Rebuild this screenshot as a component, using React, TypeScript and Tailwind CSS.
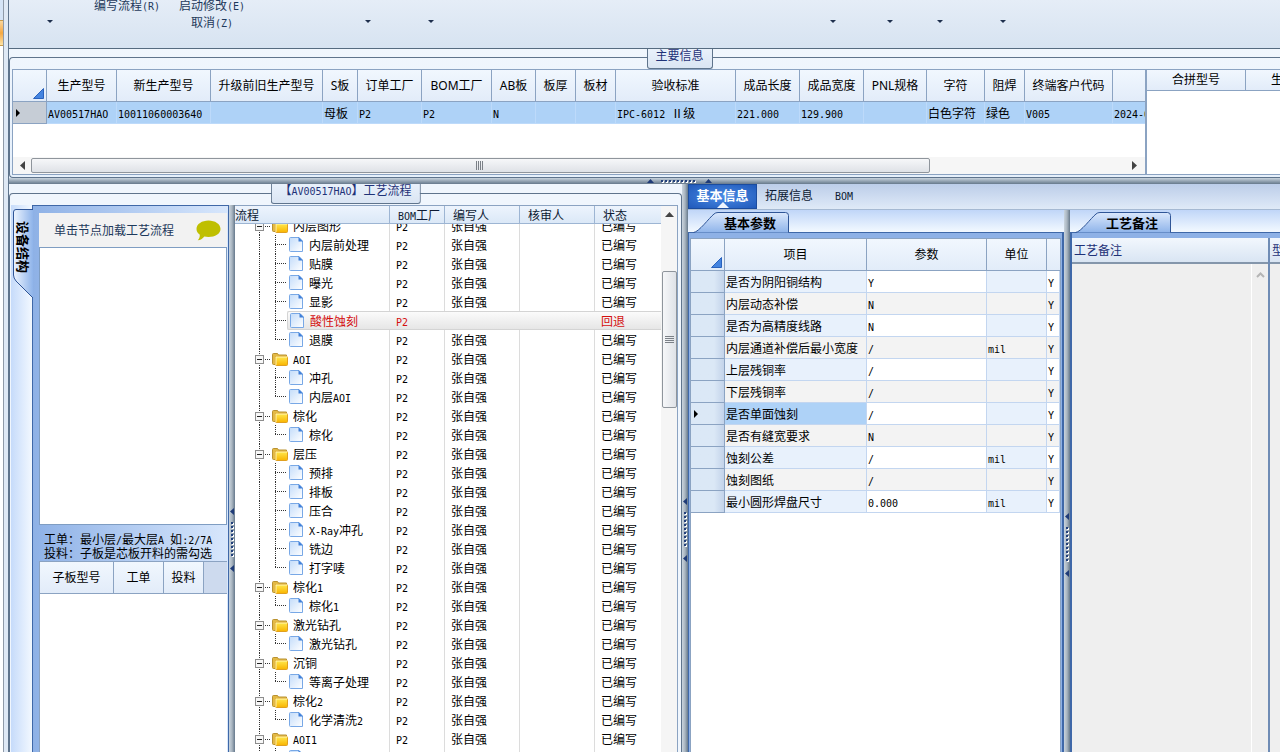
import { clsx } from "clsx";
import type { ReactNode } from "react";

// ── data ─────────────────────────────────────────────────────────────────────

const INFO_COLUMNS = [
  { title: "生产型号", width: 70, value: "AV00517HAO" },
  { title: "新生产型号", width: 94, value: "10011060003640" },
  { title: "升级前旧生产型号", width: 112, value: "" },
  { title: "S板", width: 35, value: "母板" },
  { title: "订单工厂", width: 64, value: "P2" },
  { title: "BOM工厂", width: 70, value: "P2" },
  { title: "AB板", width: 44, value: "N" },
  { title: "板厚", width: 40, value: "" },
  { title: "板材", width: 40, value: "" },
  { title: "验收标准", width: 120, value: "IPC-6012 Ⅱ级" },
  { title: "成品长度", width: 64, value: "221.000" },
  { title: "成品宽度", width: 64, value: "129.900" },
  { title: "PNL规格", width: 63, value: "" },
  { title: "字符", width: 58, value: "白色字符" },
  { title: "阻焊", width: 40, value: "绿色" },
  { title: "终端客户代码", width: 88, value: "V005" },
  { title: "", width: 88, value: "2024-01-05" },
];

interface FlowGroup {
  name: string;
  steps: string[];
}

const FLOW: FlowGroup[] = [
  {
    name: "内层图形",
    steps: ["内层前处理", "贴膜", "曝光", "显影", "酸性蚀刻", "退膜"],
  },
  { name: "AOI", steps: ["冲孔", "内层AOI"] },
  { name: "棕化", steps: ["棕化"] },
  {
    name: "层压",
    steps: ["预排", "排板", "压合", "X-Ray冲孔", "铣边", "打字唛"],
  },
  { name: "棕化1", steps: ["棕化1"] },
  { name: "激光钻孔", steps: ["激光钻孔"] },
  { name: "沉铜", steps: ["等离子处理"] },
  { name: "棕化2", steps: ["化学清洗2"] },
  { name: "AOI1", steps: ["自动检查"] },
];

const REJECTED = "酸性蚀刻";

const PARAMS = [
  ["是否为阴阳铜结构", "Y", ""],
  ["内层动态补偿", "N", ""],
  ["是否为高精度线路", "N", ""],
  ["内层通道补偿后最小宽度", "/", "mil"],
  ["上层残铜率", "/", ""],
  ["下层残铜率", "/", ""],
  ["是否单面蚀刻", "/", ""],
  ["是否有缝宽要求", "N", ""],
  ["蚀刻公差", "/", "mil"],
  ["蚀刻图纸", "/", ""],
  ["最小圆形焊盘尺寸", "0.000", "mil"],
];

// ── small pieces ─────────────────────────────────────────────────────────────

// Latin runs are set in a half-width face beside the full-width characters
function Mixed({ children }: { children: string }) {
  return (
    <>
      {children.split(/([\x20-\x7e]+)/).map((part, i) =>
        i % 2 ? (
          <span
            key={i}
            className="font-['DejaVu_Sans_Mono','Liberation_Mono',monospace] text-[10px] leading-none whitespace-pre"
          >
            {part}
          </span>
        ) : (
          part
        ),
      )}
    </>
  );
}

function CornerMark() {
  return (
    <svg width="11" height="11" className="mt-auto mr-0.5 mb-0.5 ml-auto block">
      <path d="M0.5 10.5 L10.5 0.5 V10.5 Z" fill="#4484e0" stroke="#2a62bd" />
    </svg>
  );
}

function RowPointer() {
  return (
    <svg width="4" height="8" className="ml-[3px] block">
      <path d="M0 0 L4 4 L0 8 Z" fill="#000" />
    </svg>
  );
}

function DropButton({ className }: { className: string }) {
  return (
    <button
      type="button"
      aria-label="更多"
      className={clsx("flex shrink-0 justify-center pb-[18px]", className)}
    >
      <span className="flex h-[17px] items-center">
        <svg width="6" height="3">
          <path d="M0 0 H6 L3 3 Z" fill="#1e2f4d" />
        </svg>
      </span>
    </button>
  );
}

function Caption({ children }: { children: ReactNode }) {
  return (
    <div className="h-5 rounded-b-[3px] border border-t-0 border-[#5f748c] bg-linear-to-b from-[#e9f1fb] to-[#dae5f3] px-2 text-center leading-3 whitespace-nowrap text-[#1f3278]">
      {children}
    </div>
  );
}

function Grip({ vertical = false }: { vertical?: boolean }) {
  const dots = Array.from({ length: 9 }, (_, i) => i);
  if (vertical) {
    return (
      <svg width="6" height="64" className="block">
        <path d="M5 0 V7 L1 3.5 Z M5 57 V64 L1 60.5 Z" fill="#1f3b78" />
        {dots.map((i) => (
          <g key={i}>
            <rect x="3" y={15 + i * 4} width="2" height="2" fill="#fff" />
            <rect x="2" y={14 + i * 4} width="2" height="2" fill="#22407c" />
          </g>
        ))}
      </svg>
    );
  }
  return (
    <svg width="66" height="6" className="block">
      <path d="M0 5 H7 L3.5 1 Z M58 5 H65 L61.5 1 Z" fill="#1f3b78" />
      {dots.map((i) => (
        <g key={i}>
          <rect x={15 + i * 4} y="3" width="2" height="2" fill="#fff" />
          <rect x={14 + i * 4} y="2" width="2" height="2" fill="#22407c" />
        </g>
      ))}
    </svg>
  );
}

function VSplitter({ className }: { className?: string }) {
  return (
    <div
      className={clsx(
        "w-1.5 shrink-0 bg-linear-to-r from-[#c9d4de] via-[#a9b5c0] to-[#66798c]",
        className,
      )}
    >
      <Grip vertical />
    </div>
  );
}

function SlantTab({ children }: { children: string }) {
  return (
    <div className="h-[22px] shrink-0 bg-linear-to-b from-[#c0d6f8] to-[#f3f9ff] pt-0.5 pl-[5px]">
      <button
        type="button"
        className="relative block h-[21px] w-24 pl-[31px] text-left text-[13px] leading-5 font-bold text-black"
      >
        <svg className="absolute inset-0" width="96" height="21">
          <defs>
            <linearGradient id="slant" x1="0" y1="0" x2="0" y2="1">
              <stop offset="0" stopColor="#dbe8fc" />
              <stop offset="1" stopColor="#8fb4ea" />
            </linearGradient>
          </defs>
          <path
            d="M0.5 20.5 C6 20 16 6 21 2 Q22.500 0.500 25 0.500 H92.500 Q95.500 0.500 95.500 3.500 V20.500"
            fill="url(#slant)"
            stroke="#2f5597"
          />
        </svg>
        <span className="relative">{children}</span>
      </button>
    </div>
  );
}

// ── ribbon ───────────────────────────────────────────────────────────────────

function Ribbon() {
  return (
    <div className="flex h-[49px] shrink-0 items-end overflow-hidden border-b border-[#566b80] bg-linear-to-b from-[#e5edf7] to-[#d7e3f1] leading-[17px] text-[#1e395b]">
      <DropButton className="w-[82px]" />
      <button type="button" className="w-[72px] shrink-0 pb-[35px]">
        <Mixed>编写流程(R)</Mixed>
      </button>
      <button type="button" className="w-[98px] shrink-0 pb-[18px]">
        <Mixed>启动修改(E)</Mixed>
        <br />
        <Mixed>取消(Z)</Mixed>
      </button>
      <DropButton className="ml-[78px] w-[58px]" />
      <DropButton className="w-[68px]" />
      <DropButton className="ml-[340px] w-14" />
      <DropButton className="w-[58px]" />
      <DropButton className="w-[42px]" />
      <DropButton className="w-[84px]" />
    </div>
  );
}

// ── main info ────────────────────────────────────────────────────────────────

const GRID = "table-fixed border-separate border-spacing-0";

const HEAD_CELL =
  "overflow-hidden border-r border-b border-[#8ba3c2] bg-linear-to-b from-[#f1f7fe] to-[#e2ecf9] p-0 text-center font-normal whitespace-nowrap font-['Noto_Sans','Noto_Sans_CJK_SC',sans-serif]";

function InfoGrid() {
  return (
    <div className="flex min-w-0 flex-1 flex-col overflow-hidden border-r-2 border-l border-[#8ba3c2] bg-white">
      <table className={clsx("w-[1188px]", GRID)}>
        <colgroup>
          <col className="w-[34px]" />
          {INFO_COLUMNS.map((c, i) => (
            <col key={i} style={{ width: c.width }} />
          ))}
        </colgroup>
        <thead>
          <tr className="h-8">
            <th className={HEAD_CELL} aria-label="选择">
              <div className="flex h-[31px]">
                <CornerMark />
              </div>
            </th>
            {INFO_COLUMNS.map((c, i) => (
              <th key={i} className={HEAD_CELL}>
                {c.title}
              </th>
            ))}
          </tr>
        </thead>
        <tbody>
          <tr className="h-[22px] bg-[#aed2f7]">
            <td className="border-r border-b border-[#8ba3c2] bg-[#c6cdd6] p-0">
              <RowPointer />
            </td>
            {INFO_COLUMNS.map((c, i) => (
              <td
                key={i}
                className="overflow-hidden border-r border-b border-[#bddafa] p-0 pl-px whitespace-nowrap"
              >
                <Mixed>{c.value}</Mixed>
              </td>
            ))}
          </tr>
        </tbody>
      </table>
      <div className="mt-auto flex h-[17px] items-center bg-[#f6f6f6]">
        <button type="button" aria-label="向左" className="w-[18px] pl-[7px]">
          <svg width="5" height="9" className="block">
            <path d="M5 0 V9 L0 4.5 Z" fill="#444" />
          </svg>
        </button>
        <div className="flex-1">
          <div className="flex h-[15px] w-[82%] items-center justify-center rounded-[2px] border border-[#8f959c] bg-linear-to-b from-[#f6f7f9] to-[#dfe2e7]">
            <svg width="8" height="9">
              <path
                d="M0.5 0 V9 M2.5 0 V9 M4.500 0 V9 M6.500 0 V9"
                stroke="#7b8087"
              />
            </svg>
          </div>
        </div>
        <button type="button" aria-label="向右" className="w-[18px] pl-[5px]">
          <svg width="5" height="9" className="block">
            <path d="M0 0 V9 L5 4.5 Z" fill="#444" />
          </svg>
        </button>
      </div>
    </div>
  );
}

function MainInfo() {
  return (
    <section className="relative shrink-0 bg-linear-to-b from-[#f0f6fd] to-[#e6f0fb] pt-2">
      <div className="rounded-l-[4px] border border-r-0 border-[#5f748c] pt-[11px] pb-0.5 pl-0.5">
        <div className="flex h-[106px] border-y border-[#8ba3c2]">
          <InfoGrid />
          <div className="w-[133px] shrink-0 overflow-hidden bg-white">
            <table className={clsx("w-[198px]", GRID)}>
              <thead>
                <tr className="h-[21px]">
                  <th className={HEAD_CELL}>合拼型号</th>
                  <th className={HEAD_CELL}>生产型号</th>
                </tr>
              </thead>
            </table>
          </div>
        </div>
      </div>
      <div className="absolute top-0 left-1/2 ml-0.5">
        <Caption>主要信息</Caption>
      </div>
    </section>
  );
}

// ── device structure ─────────────────────────────────────────────────────────

function DevicePanel() {
  return (
    <div className="flex w-[218px] shrink-0">
      <div className="relative w-[21px] shrink-0 bg-linear-to-r from-[#c6dbfa] to-[#f2f8ff] pt-1">
        <button
          type="button"
          className="relative ml-0.5 flex h-[90px] w-5 items-start justify-center pt-3"
        >
          <svg className="absolute inset-0" width="20" height="90">
            <defs>
              <linearGradient id="side" x1="0" y1="0" x2="1" y2="0">
                <stop offset="0" stopColor="#eef5ff" />
                <stop offset="1" stopColor="#8fb4ea" />
              </linearGradient>
            </defs>
            <path
              d="M20 0.5 H3 Q0.5 0.5 0.5 3 V66 Q0.500 69 3 72 L20 89"
              fill="url(#side)"
              stroke="#2f5597"
            />
          </svg>
          <span className="relative text-[13px] leading-5 font-bold text-black [text-orientation:sideways] [writing-mode:vertical-rl]">
            设备结构
          </span>
        </button>
      </div>
      <div className="flex min-w-0 flex-1 flex-col border-t border-r border-l border-[#3f68a8] bg-linear-to-r from-[#8eb1e6] to-[#d8e7fc] pt-[7px] pr-px pl-1.5">
        <div className="flex h-[34px] shrink-0 items-center justify-between bg-[#f2f2f2] pr-1.5 pl-[15px] text-[#1e395b]">
          单击节点加载工艺流程
          <svg width="25" height="21" viewBox="0 0 25 21">
            <path
              d="M12.500 0.500 C19 0.500 24.500 4 24.500 9 C24.500 13.800 19 17 12.500 17 C11 17 9.500 16.800 8.300 16.500 C6.500 18.800 4.500 20 1.800 20.300 C3.300 18.700 3.800 17.200 3.800 14.800 C1.800 13.300 0.500 11.300 0.500 9 C0.500 4 6 0.500 12.500 0.500 Z"
              fill="#bfbf00"
            />
          </svg>
        </div>
        <div className="h-[278px] shrink-0 border border-[#7f9dc2] bg-white" />
        <p className="shrink-0 pt-[7px] pb-px pl-[5px] leading-[14px] whitespace-nowrap text-black">
          <Mixed>工单：最小层/最大层A 如:2/7A</Mixed>
          <br />
          投料：子板是芯板开料的需勾选
        </p>
        <div className="min-h-0 flex-1 border-t border-l border-[#8ba3c2] bg-white">
          <table className={clsx("w-full", GRID)}>
            <colgroup>
              <col className="w-[74px]" />
              <col className="w-[50px]" />
              <col className="w-10" />
              <col />
            </colgroup>
            <thead>
              <tr className="h-8">
                <th className={HEAD_CELL}>子板型号</th>
                <th className={HEAD_CELL}>工单</th>
                <th className={HEAD_CELL}>投料</th>
                <td className="border-b border-[#8ba3c2] bg-[#cddaee]" />
              </tr>
            </thead>
          </table>
        </div>
      </div>
    </div>
  );
}

// ── process tree ─────────────────────────────────────────────────────────────

function GroupNode() {
  return (
    <svg width="56" height="19" className="block shrink-0">
      <defs>
        <linearGradient id="folder" x1="0" y1="0" x2="0" y2="1">
          <stop offset="0" stopColor="#ffe94f" />
          <stop offset="1" stopColor="#f9b400" />
        </linearGradient>
      </defs>
      <path d="M24.500 0 V19 M30 10.500 H36" stroke="#333" strokeDasharray="1 1" />
      <rect x="20.500" y="6.500" width="8" height="8" fill="#f7f7f7" stroke="#8d8d8d" />
      <path d="M22 10.500 H27" stroke="#222" />
      <path
        d="M37.500 5.500 Q37.500 4.500 38.500 4.500 H42.500 L43.500 6 H51.500 V15.500 H38.500 Q37.500 15.500 37.500 14.500 Z"
        fill="#e3b945"
        stroke="#b9912f"
      />
      <rect x="40.500" y="7.500" width="12" height="9" rx="1" fill="url(#folder)" stroke="#e0a020" />
      <path d="M41 16 V8 H52" fill="none" stroke="#fff6b0" />
    </svg>
  );
}

function StepLines({ last }: { last: boolean }) {
  return (
    <svg width="52" height="19" className="block shrink-0">
      <path
        d={clsx("M24.5 0 V19", last ? "M40.5 0 V9" : "M40.5 0 V19", "M40 9.5 H51")}
        fill="none"
        stroke="#333"
        strokeDasharray="1 1"
      />
    </svg>
  );
}

function PageIcon() {
  return (
    <svg width="16" height="17" className="ml-0.5 block shrink-0">
      <defs>
        <linearGradient id="page" x1="0" y1="0" x2="1" y2="1">
          <stop offset="0" stopColor="#c3dcfa" />
          <stop offset="1" stopColor="#fff" />
        </linearGradient>
      </defs>
      <path
        d="M1.500 1.500 H10 L13.500 5 V15.500 H1.500 Q0.500 15.500 0.500 14.500 V2.500 Q0.500 1.500 1.500 1.500 Z"
        fill="url(#page)"
        stroke="#78a8e6"
      />
      <path d="M9.500 1 L14 5.500 H9.500 Z" fill="#3f7fd8" />
    </svg>
  );
}

const TREE_HEAD =
  "border-r border-b border-[#9db5d3] bg-linear-to-b from-[#edf4fd] to-[#dbe8f7] p-0 text-left font-normal text-[#0d1a33]";

function TreeCols() {
  return (
    <colgroup>
      <col className="w-[155px]" />
      <col className="w-[55px]" />
      <col className="w-[75px]" />
      <col className="w-[75px]" />
      <col />
    </colgroup>
  );
}

function TreeRow({
  name,
  child,
  last = false,
}: {
  name: string;
  child: boolean;
  last?: boolean;
}) {
  const hot = name === REJECTED;
  const cell = clsx(
    "p-0 whitespace-nowrap",
    hot
      ? "border-y border-[#d4d4d4] bg-linear-to-b from-[#fbfbfb] to-[#e6e6e6]"
      : "border-r border-r-[#dcdcdc]",
  );
  return (
    <tr className={clsx("h-[19px]", hot ? "text-[#d40f0f]" : "text-black")}>
      <td
        className={clsx(
          "p-0 whitespace-nowrap",
          !hot && "border-r border-r-[#dcdcdc]",
        )}
      >
        <div className="flex h-[19px] items-center">
          {child ? <StepLines last={last} /> : <GroupNode />}
          <span
            className={clsx(
              "flex h-[19px] flex-1 items-center",
              child ? "gap-1" : "pl-0.5",
              hot &&
                "rounded-l-[2px] border border-r-0 border-[#d4d4d4] bg-linear-to-b from-[#fbfbfb] to-[#e6e6e6]",
            )}
          >
            {child && <PageIcon />}
            <span>
              <Mixed>{name}</Mixed>
            </span>
          </span>
        </div>
      </td>
      <td className={clsx(cell, "pl-1.5")}>
        <Mixed>P2</Mixed>
      </td>
      <td className={clsx(cell, "pl-1.5")}>{hot ? "" : "张自强"}</td>
      <td className={cell} />
      <td className={clsx(cell, "border-r-0 pl-1.5")}>
        {hot ? "回退" : "已编写"}
      </td>
    </tr>
  );
}

function ProcessTree() {
  return (
    <div className="flex min-w-0 flex-1 border-t border-r border-[#8ba3c2] bg-white">
      <div className="flex min-w-0 flex-1 flex-col">
        <table className={clsx("w-full shrink-0", GRID)}>
          <TreeCols />
          <thead>
            <tr className="h-[18px] leading-4">
              <th className={TREE_HEAD}>流程</th>
              <th className={clsx(TREE_HEAD, "pl-2 whitespace-nowrap")}>
                <Mixed>BOM工厂</Mixed>
              </th>
              <th className={clsx(TREE_HEAD, "pl-2")}>编写人</th>
              <th className={clsx(TREE_HEAD, "pl-2")}>核审人</th>
              <th className={clsx(TREE_HEAD, "border-r-0 pl-2")}>状态</th>
            </tr>
          </thead>
        </table>
        {/* scrolled by part of a row */}
        <div className="min-h-0 flex-1 overflow-hidden">
          <table className={clsx("-mt-2 w-full leading-4", GRID)}>
            <TreeCols />
            <tbody>
              {FLOW.map((group) => [
                <TreeRow key={group.name} name={group.name} child={false} />,
                ...group.steps.map((step, i) => (
                  <TreeRow
                    key={`${group.name}/${step}`}
                    name={step}
                    child
                    last={i === group.steps.length - 1}
                  />
                )),
              ])}
            </tbody>
          </table>
        </div>
      </div>
      <div className="flex w-4 shrink-0 flex-col items-center bg-[#f5f5f5]">
        <button type="button" aria-label="向上" className="h-[65px] pt-1.5">
          <svg width="9" height="5" className="block">
            <path d="M0 5 H9 L4.500 0 Z" fill="#444" />
          </svg>
          <span className="block h-[54px]" />
        </button>
        <div className="flex h-[137px] w-[15px] items-center justify-center rounded-[2px] border border-[#8f959c] bg-linear-to-r from-[#f6f7f9] to-[#dfe2e7]">
          <svg width="9" height="8">
            <path
              d="M0 0.500 H9 M0 2.500 H9 M0 4.500 H9 M0 6.500 H9"
              stroke="#7b8087"
            />
          </svg>
        </div>
      </div>
    </div>
  );
}

function ProcessSection() {
  return (
    <section className="relative flex w-[673px] shrink-0 flex-col bg-[#f0f6fd] pt-[9px]">
      <div className="flex min-h-0 flex-1 rounded-t-[4px] border border-b-0 border-[#5f748c] pt-[11px] pr-[3px] pl-px">
        <DevicePanel />
        <VSplitter className="pt-[303px]" />
        <ProcessTree />
      </div>
      <div className="absolute top-0 left-1/2 -translate-x-1/2">
        <Caption>
          <Mixed>【AV00517HAO】工艺流程</Mixed>
        </Caption>
      </div>
    </section>
  );
}

// ── parameters ───────────────────────────────────────────────────────────────

function ParamGrid() {
  return (
    <div className="min-h-0 flex-1 overflow-hidden border border-b-0 border-[#8ba3c2] bg-white">
      <table className={clsx("w-full", GRID)}>
        <colgroup>
          <col className="w-[34px]" />
          <col className="w-[142px]" />
          <col className="w-[120px]" />
          <col className="w-[60px]" />
          <col />
        </colgroup>
        <thead>
          <tr className="h-8">
            <th className={HEAD_CELL} aria-label="选择">
              <div className="flex h-[31px]">
                <CornerMark />
              </div>
            </th>
            <th className={HEAD_CELL}>项目</th>
            <th className={HEAD_CELL}>参数</th>
            <th className={HEAD_CELL}>单位</th>
            <th className={clsx(HEAD_CELL, "border-r-0")} aria-label="启用" />
          </tr>
        </thead>
        <tbody>
          {PARAMS.map(([name, value, unit], i) => {
            const odd = i % 2 === 1;
            const current = name === "是否单面蚀刻";
            const cell =
              "overflow-hidden border-r border-b border-[#c3d6f0] p-0 pl-px whitespace-nowrap";
            const fixed = odd ? "bg-[#f3f3f3]" : "bg-[#e8f1fc]";
            const edit = odd ? "bg-[#f3f3f3]" : "bg-white";
            return (
              <tr key={name} className="h-[22px]">
                <td className="border-r border-b border-[#8ba3c2] bg-linear-to-r from-[#dbe8f6] from-70% to-[#c3d3ea] p-0">
                  {current && <RowPointer />}
                </td>
                <td className={clsx(cell, current ? "bg-[#aed2f7]" : fixed)}>
                  {name}
                </td>
                <td className={clsx(cell, edit)}>
                  <Mixed>{value}</Mixed>
                </td>
                <td className={clsx(cell, fixed)}>
                  <Mixed>{unit}</Mixed>
                </td>
                <td className={clsx(cell, edit)}>
                  <Mixed>Y</Mixed>
                </td>
              </tr>
            );
          })}
        </tbody>
      </table>
    </div>
  );
}

function RemarkPanel() {
  const head =
    "flex h-[26px] shrink-0 items-center border-b-2 border-[#8496ab] bg-linear-to-b from-[#f2f7fd] to-[#d9e5f3] pl-0.5 text-[#1f3278]";
  return (
    <div className="flex w-[210px] shrink-0 flex-col">
      <SlantTab>工艺备注</SlantTab>
      <div className="flex min-h-0 flex-1 border-t border-l-2 border-[#3f68a8] bg-[#8eb1e6] pt-[5px]">
        <div className="flex min-w-0 flex-1 flex-col">
          <div className={head}>工艺备注</div>
          <div className="flex flex-1 bg-[#efefef]">
            <div className="flex-1" />
            <div className="w-[17px] border-l border-white pt-2 pl-1">
              <svg width="9" height="6">
                <path
                  d="M1 5 L4.500 1.500 L8 5"
                  fill="none"
                  stroke="#b5b5b5"
                  strokeWidth="2"
                />
              </svg>
            </div>
          </div>
        </div>
        <div className="flex w-3 shrink-0 flex-col overflow-hidden border-l-2 border-[#6f8cb5] bg-[#efefef]">
          <div className={clsx(head, "whitespace-nowrap")}>型号</div>
        </div>
      </div>
    </div>
  );
}

function BasicInfo() {
  return (
    <section className="flex min-w-0 flex-1 flex-col">
      <nav className="flex h-[26px] shrink-0 items-stretch border-b border-[#a5b9d2] bg-linear-to-b from-[#bccde9] to-[#dfeaf7] text-[#0d1a33]">
        <button
          type="button"
          className="relative w-[69px] border border-[#1b4c9e] bg-radial from-[#4a8be6] to-[#2059ba] pb-1 text-[13px] font-bold text-white"
        >
          基本信息
          <svg className="absolute bottom-0 left-7" width="12" height="6">
            <path d="M0 6 L6 0 L12 6 Z" fill="#eef5fe" />
          </svg>
        </button>
        <button type="button" className="px-2 pb-1">
          拓展信息
        </button>
        <button type="button" className="ml-1.5 px-2 pb-1">
          <Mixed>BOM</Mixed>
        </button>
      </nav>
      <div className="flex min-h-0 flex-1">
        <div className="flex min-w-0 flex-1 flex-col">
          <SlantTab>基本参数</SlantTab>
          <div className="flex min-h-0 flex-1 flex-col border-t border-r-2 border-l border-[#3f68a8] bg-[#8eb1e6] px-px pt-[5px]">
            <ParamGrid />
          </div>
        </div>
        <VSplitter className="pt-[303px]" />
        <RemarkPanel />
      </div>
    </section>
  );
}

// ── page ─────────────────────────────────────────────────────────────────────

export default function App() {
  return (
    <div className="flex h-screen overflow-hidden bg-[#dfe9f5] font-['Noto_Sans_CJK_SC',sans-serif] text-xs text-black">
      <div className="flex w-2 shrink-0">
        <div className="flex w-1 flex-col border-r border-[#8f9aa8]">
          <div className="h-5 bg-[#d5e4f6]" />
          <div className="h-[26px] border-y border-[#c79a4a] bg-linear-to-b from-[#fbd79b] via-[#f5a83f] to-[#fde3a4]" />
          <div className="flex-1 bg-white" />
        </div>
      </div>
      <main className="flex min-w-0 flex-1 flex-col border-l border-[#5f748c]">
        <Ribbon />
        <MainInfo />
        <div className="flex h-1.5 shrink-0 justify-center bg-linear-to-b from-[#c9d4de] to-[#66798c] pl-[70px]">
          <Grip />
        </div>
        <div className="flex min-h-0 flex-1">
          <ProcessSection />
          <VSplitter className="pt-[314px]" />
          <BasicInfo />
        </div>
      </main>
    </div>
  );
}
